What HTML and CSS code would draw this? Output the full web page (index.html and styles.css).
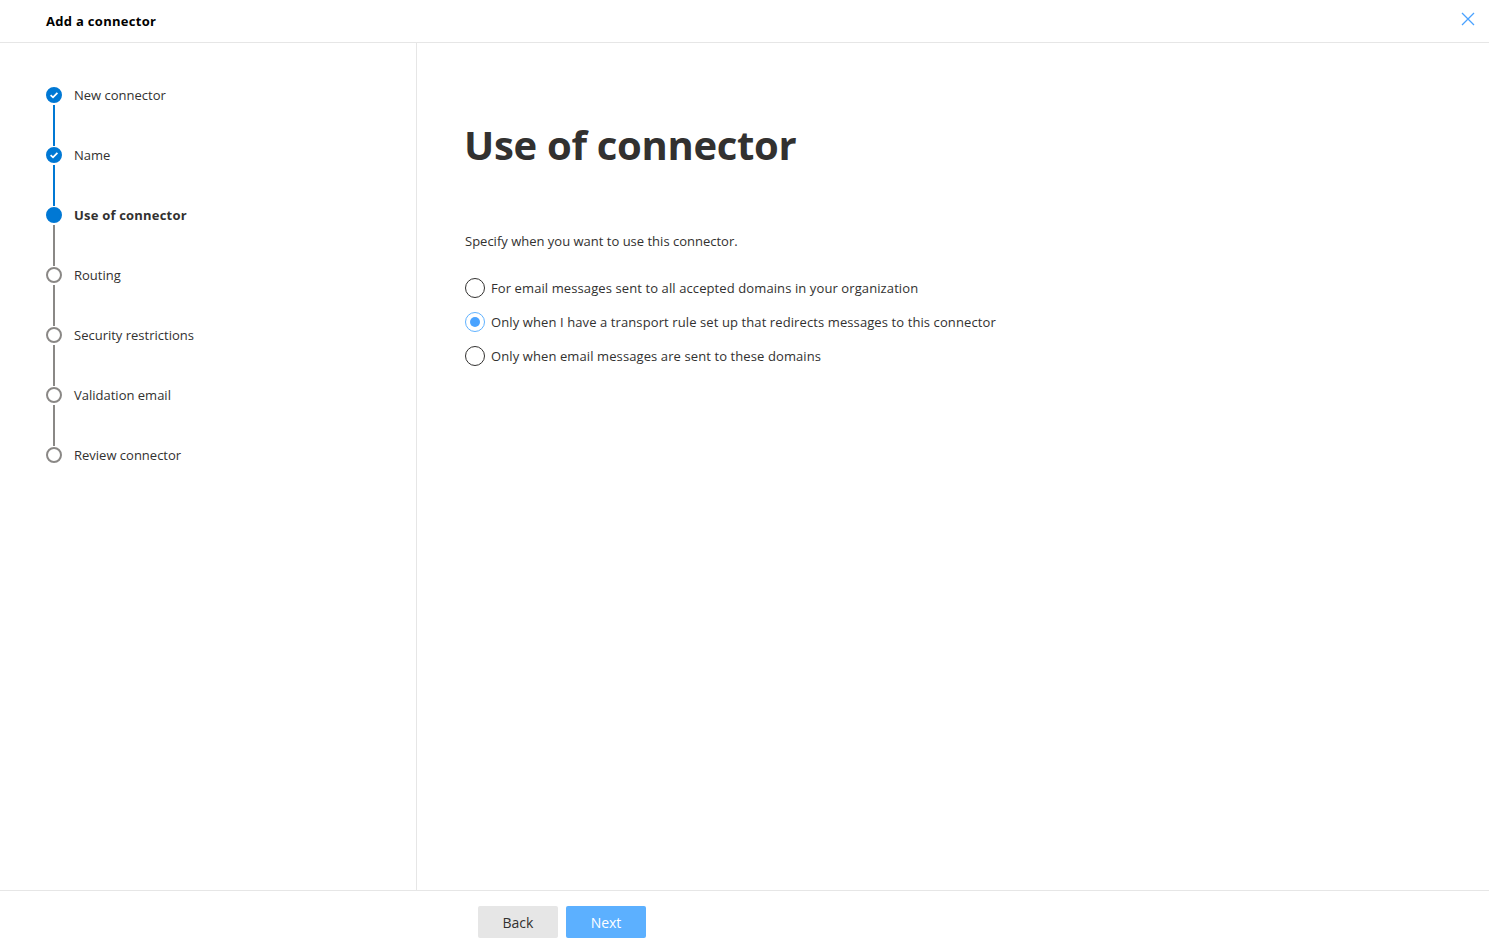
FILE: index.html
```html
<!DOCTYPE html>
<html>
<head>
<meta charset="utf-8">
<link rel="stylesheet" href="styles.css">
</head>
<body>
<div class="panel">
  <header class="header">
    <h1 class="header-title">Add a connector</h1>
    <button class="close" aria-label="Close">
      <svg width="14" height="14" viewBox="0 0 14 14"><path d="M1 1 L13 13 M13 1 L1 13" stroke="#4aa2ff" stroke-width="1.3" fill="none"/></svg>
    </button>
  </header>
  <div class="body">
    <nav class="steps">
      <div class="step done">
        <div class="marker"><span class="dot"><svg width="12" height="12" viewBox="0 0 12 12"><path d="M2.6 6.2 L5 8.4 L9.4 3.8" stroke="#fff" stroke-width="1.7" fill="none"/></svg></span><span class="line"></span></div>
        <span class="label">New connector</span>
      </div>
      <div class="step done">
        <div class="marker"><span class="dot"><svg width="12" height="12" viewBox="0 0 12 12"><path d="M2.6 6.2 L5 8.4 L9.4 3.8" stroke="#fff" stroke-width="1.7" fill="none"/></svg></span><span class="line"></span></div>
        <span class="label">Name</span>
      </div>
      <div class="step current">
        <div class="marker"><span class="dot"></span><span class="line"></span></div>
        <span class="label">Use of connector</span>
      </div>
      <div class="step">
        <div class="marker"><span class="dot"></span><span class="line"></span></div>
        <span class="label">Routing</span>
      </div>
      <div class="step">
        <div class="marker"><span class="dot"></span><span class="line"></span></div>
        <span class="label">Security restrictions</span>
      </div>
      <div class="step">
        <div class="marker"><span class="dot"></span><span class="line"></span></div>
        <span class="label">Validation email</span>
      </div>
      <div class="step last">
        <div class="marker"><span class="dot"></span></div>
        <span class="label">Review connector</span>
      </div>
    </nav>
    <main class="content">
      <h2 class="title">Use of connector</h2>
      <p class="desc">Specify when you want to use this connector.</p>
      <div class="options">
        <label class="option"><span class="radio"></span><span>For email messages sent to all accepted domains in your organization</span></label>
        <label class="option"><span class="radio checked"></span><span>Only when I have a transport rule set up that redirects messages to this connector</span></label>
        <label class="option"><span class="radio"></span><span>Only when email messages are sent to these domains</span></label>
      </div>
    </main>
  </div>
  <footer class="footer">
    <button class="btn back">Back</button>
    <button class="btn next">Next</button>
  </footer>
</div>
</body>
</html>
```
FILE: styles.css
```css
* { box-sizing: border-box; }
html, body { margin: 0; padding: 0; height: 100%; }
body {
  font-family: "Open Sans", "Noto Sans", "Liberation Sans", sans-serif;
  color: #323130;
  background: #fff;
}
.panel {
  display: flex;
  flex-direction: column;
  height: 950px;
}
.header {
  height: 43px;
  border-bottom: 1px solid #e6e6e6;
  display: flex;
  align-items: center;
  justify-content: space-between;
  padding: 0 14px 0 46px;
  flex-shrink: 0;
}
.header-title {
  margin: 0;
  font-size: 13px;
  font-weight: 700;
  color: #000;
  letter-spacing: 0.3px;
}
.close {
  border: 0;
  background: none;
  padding: 0;
  width: 14px;
  height: 14px;
  display: flex;
  margin-top: -4px;
}
.body {
  flex: 1;
  display: flex;
  min-height: 0;
}
.steps {
  width: 417px;
  border-right: 1px solid #e6e6e6;
  padding: 43px 0 0 46px;
  flex-shrink: 0;
}
.step {
  display: flex;
  height: 60px;
}
.marker {
  width: 16px;
  display: flex;
  flex-direction: column;
  align-items: center;
  margin-right: 12px;
}
.dot {
  width: 16px;
  height: 16px;
  border-radius: 50%;
  border: 2px solid #8a8886;
  flex-shrink: 0;
  display: flex;
  align-items: center;
  justify-content: center;
  margin-top: 1px;
}
.line {
  width: 2px;
  flex: 1;
  background: #8a8886;
  margin: 2px 0 0;
}
.step.done .dot, .step.current .dot {
  background: #0078d4;
  border-color: #0078d4;
}
.step.done .line { background: #0078d4; }
.label {
  font-size: 13px;
  line-height: 18px;
  color: #323130;
}
.step.current .label { font-weight: 700; letter-spacing: 0.2px; }
.content {
  flex: 1;
  padding: 74px 0 0 48px;
}
.title {
  margin: 0 0 0 -1px;
  font-size: 40px;
  font-weight: 700;
  color: #323130;
  line-height: 56px;
  letter-spacing: -0.3px;
}
.desc {
  margin: 59px 0 0;
  font-size: 13px;
  line-height: 18px;
}
.options {
  margin-top: 28px;
  display: flex;
  flex-direction: column;
  gap: 14px;
}
.option {
  display: flex;
  align-items: center;
  font-size: 13px;
  line-height: 20px;
  gap: 6px;
  letter-spacing: 0.1px;
}
.radio {
  width: 20px;
  height: 20px;
  border-radius: 50%;
  border: 1px solid #323130;
  display: flex;
  align-items: center;
  justify-content: center;
  flex-shrink: 0;
}
.radio.checked { border-color: #5fb2ff; }
.radio.checked::after {
  content: "";
  width: 10px;
  height: 10px;
  border-radius: 50%;
  background: #4aa3ff;
}
.footer {
  height: 60px;
  border-top: 1px solid #e6e6e6;
  flex-shrink: 0;
  display: flex;
  align-items: flex-start;
  gap: 8px;
  padding: 15px 0 0 478px;
}
.btn {
  width: 80px;
  height: 32px;
  border: 0;
  border-radius: 2px;
  font-family: inherit;
  font-size: 14px;
}
.back { background: #e6e6e6; color: #323130; }
.next { background: #5cb0ff; color: #fff; }
```
